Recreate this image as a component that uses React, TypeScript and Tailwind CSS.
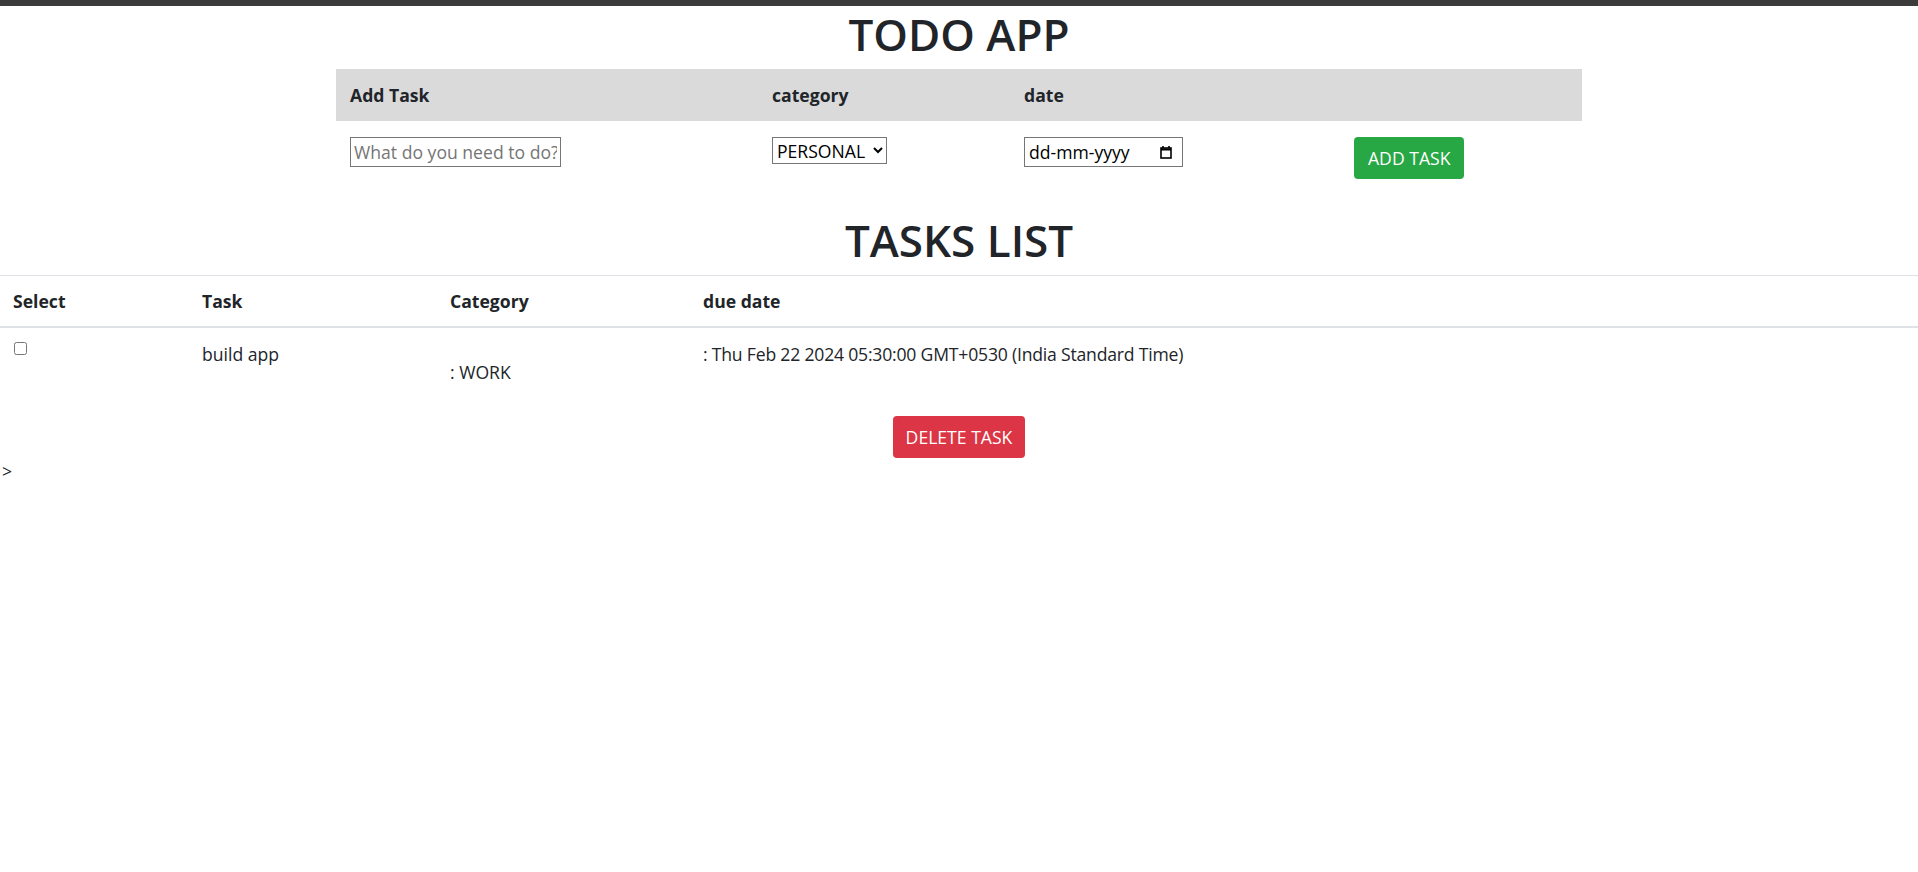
import React from 'react';

const FONT = '"Open Sans", "Liberation Sans", sans-serif';

const CalendarIcon = () => (
  <svg width="12" height="14" viewBox="0 0 12 14" fill="none" stroke="#000" strokeWidth="1.6">
    <rect x="1" y="3" width="10" height="10" />
    <line x1="1" y1="4.5" x2="11" y2="4.5" strokeWidth="2" />
    <line x1="3" y1="1" x2="3" y2="3" />
    <line x1="9" y1="1" x2="9" y2="3" />
  </svg>
);

export default function App() {
  return (
    <div className="min-h-screen bg-white text-[#212529] text-[17.6px] leading-[26.4px]" style={{ fontFamily: FONT }}>
      <div className="h-[6px] bg-[#3b3b3b]" />
      <h1 className="pt-[2px] text-center text-[44px] leading-[52.8px] font-semibold mb-[8px]">TODO APP</h1>

      {/* add task form */}
      <table className="w-[1246px] mx-auto table-fixed border-collapse">
        <thead className="bg-[#dadada]">
          <tr>
            <th className="w-[423px] pl-[14px] pr-[13px] py-[13px] text-left font-bold">Add Task</th>
            <th className="w-[252px] px-[13px] py-[13px] text-left font-bold">category</th>
            <th className="w-[330px] px-[13px] py-[13px] text-left font-bold">date</th>
            <th className="px-[13px] py-[13px]" />
          </tr>
        </thead>
        <tbody>
          <tr>
            <td className="px-[14px] pt-[16px] pb-[13px] align-top">
              <input
                type="text"
                placeholder="What do you need to do?"
                className="w-[211px] h-[30px] px-[3px] border border-[#767676] placeholder:text-[#757575] leading-[26px] outline-none"
              />
            </td>
            <td className="px-[13px] pt-[16px] pb-[13px] align-top">
              <select className="w-[115px] h-[27px] border border-[#767676] text-black leading-[24px]">
                <option>PERSONAL</option>
                <option>WORK</option>
              </select>
            </td>
            <td className="px-[13px] pt-[16px] pb-[13px] align-top">
              <div className="flex w-[159px] h-[30px] items-center justify-between pl-[4px] pr-[10px] border border-[#767676] text-black">
                <span>dd-mm-yyyy</span>
                <CalendarIcon />
              </div>
            </td>
            <td className="px-[13px] pt-[16px] pb-[13px] align-top">
              <button className="h-[42px] px-[14px] rounded-[4px] bg-[#28a745] text-white">ADD TASK</button>
            </td>
          </tr>
        </tbody>
      </table>

      <h1 className="mt-[22px] mb-[8px] text-center text-[44px] leading-[52.8px] font-semibold">TASKS LIST</h1>

      {/* tasks */}
      <table className="w-full table-fixed border-collapse">
        <thead>
          <tr className="border-t border-b-2 border-[#dee2e6]">
            <th className="w-[189px] px-[13px] pt-[12px] pb-[12px] text-left font-bold">Select</th>
            <th className="w-[248px] px-[13px] pt-[12px] pb-[12px] text-left font-bold">Task</th>
            <th className="w-[253px] px-[13px] pt-[12px] pb-[12px] text-left font-bold">Category</th>
            <th className="px-[13px] pt-[12px] pb-[12px] text-left font-bold">due date</th>
          </tr>
        </thead>
        <tbody>
          <tr>
            <td className="px-[14px] pt-[14px] pb-[13px] align-top">
              <input type="checkbox" className="block w-[13px] h-[13px] m-0" />
            </td>
            <td className="px-[13px] pt-[13px] pb-[13px] align-top">build app</td>
            <td className="px-[13px] pt-[31px] pb-[12px] align-top">: WORK</td>
            <td className="px-[13px] pt-[13px] pb-[13px] align-top tracking-[-0.2px]">
              : Thu Feb 22 2024 05:30:00 GMT+0530 (India Standard Time)
            </td>
          </tr>
        </tbody>
      </table>

      <div className="flex justify-center mt-[18px]">
        <button className="h-[42px] px-[13px] rounded-[4px] bg-[#dc3545] text-white">DELETE TASK</button>
      </div>
      <div className="pl-[2px]">&gt;</div>
    </div>
  );
}
